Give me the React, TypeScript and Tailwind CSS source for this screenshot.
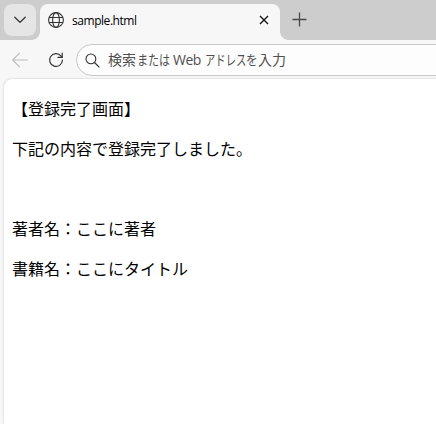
import React from "react";

const TAB_TITLE = "sample.html";

const ChevronIcon = () => (
  <svg width="12" height="8" viewBox="0 0 12 8" fill="none" stroke="#333" strokeWidth="1.3" strokeLinecap="round" strokeLinejoin="round">
    <path d="M0.8 1.2 6 6.4l5.2-5.2" />
  </svg>
);

const GlobeIcon = () => (
  <svg width="16" height="16" viewBox="0 0 16 16" fill="none" stroke="#333" strokeWidth="1.1">
    <circle cx="8" cy="8" r="7.4" />
    <ellipse cx="8" cy="8" rx="3.4" ry="7.4" />
    <path d="M1.2 5.5h13.6M1.2 10.5h13.6" />
  </svg>
);

const CloseIcon = () => (
  <svg width="10" height="10" viewBox="0 0 10 10" fill="none" stroke="#111" strokeWidth="1.3">
    <path d="m1 1 8 8M9 1 1 9" />
  </svg>
);

const PlusIcon = () => (
  <svg width="15" height="15" viewBox="0 0 15 15" fill="none" stroke="#4a4a4a" strokeWidth="1.3">
    <path d="M7.5 0.5v14M0.5 7.5h14" />
  </svg>
);

const BackIcon = () => (
  <svg width="16" height="16" viewBox="0 0 16 16" fill="none" stroke="#bdbdbd" strokeWidth="1.1" strokeLinecap="round" strokeLinejoin="round">
    <path d="M7.5 1.2.7 8l6.8 6.8M.7 8h15" />
  </svg>
);

const ReloadIcon = () => (
  <svg width="16" height="16" viewBox="0 0 16 16" fill="none" stroke="#333" strokeWidth="1.2" strokeLinecap="round" strokeLinejoin="round">
    <path d="M14.4 8A6.4 6.4 0 1 1 12.9 3.9L14 5.2" />
    <path d="M14.2 1.2v4.2H10" />
  </svg>
);

const SearchIcon = () => (
  <svg width="15" height="15" viewBox="0 0 15 15" fill="none" stroke="#333" strokeWidth="1.1" strokeLinecap="round">
    <circle cx="5.9" cy="5.9" r="4.9" />
    <path d="m9.5 9.5 4.5 4.5" />
  </svg>
);

const TabStrip = () => (
  <div className="flex h-10 bg-[#cdcdcd]">
    <button
      aria-label="Tab actions"
      className="mt-1 ml-1 flex h-8 w-8 items-center justify-center rounded-lg bg-[#e5e5e5]"
    >
      <ChevronIcon />
    </button>
    <div className="relative mt-1 ml-1 flex h-9 w-60 rounded-t-lg bg-[#f7f7f7] pl-2">
      <span className="absolute bottom-0 -left-2 h-2 w-2 bg-[radial-gradient(circle_at_0_0,transparent_7.5px,#f7f7f7_8px)]" />
      <span className="absolute -right-2 bottom-0 h-2 w-2 bg-[radial-gradient(circle_at_100%_0,transparent_7.5px,#f7f7f7_8px)]" />
      <div className="flex h-8 flex-1 items-center">
        <GlobeIcon />
        <span className="mt-px ml-2 font-['Open_Sans',sans-serif] text-xs tracking-[-0.45px] text-black">
          {TAB_TITLE}
        </span>
        <button aria-label="Close tab" className="mr-[11px] ml-auto">
          <CloseIcon />
        </button>
      </div>
    </div>
    <button aria-label="New tab" className="mt-[12px] ml-3 h-[15px]">
      <PlusIcon />
    </button>
  </div>
);

const Toolbar = () => (
  <div className="flex h-[39px] items-start">
    <button aria-label="Back" className="mt-[12px] ml-3">
      <BackIcon />
    </button>
    <button aria-label="Reload" className="mt-[12px] ml-5">
      <ReloadIcon />
    </button>
    <div className="mt-1 -mr-10 ml-3 flex h-8 flex-1 items-center rounded-full border border-[#c9c9c9] bg-[#fdfdfd] pl-2 whitespace-nowrap">
      <SearchIcon />
      <p className="ml-2 flex font-['Open_Sans','Noto_Sans_CJK_JP',sans-serif] text-sm text-[#505050]">
        <span className="w-[29px]">検索</span>
        <span className="w-[32px] origin-left scale-x-[0.79]">または</span>
        <span className="w-[36px] pl-1 tracking-[-0.5px]">Web</span>
        <span className="w-[41px] origin-left scale-x-[0.74]">アドレス</span>
        <span className="w-[12px] origin-left scale-x-[0.83]">を</span>
        <span>入力</span>
      </p>
    </div>
  </div>
);

const Page = () => (
  <main className="ml-1 flex-1 rounded-tl-lg bg-white pt-[17px] pl-2 font-['Noto_Sans_CJK_JP',sans-serif] text-base text-black shadow-[0_0_2px_rgba(0,0,0,0.25)]">
    <p className="mb-4">【登録完了画面】</p>
    <p className="mb-4">下記の内容で登録完了しました。</p>
    <br />
    <p className="my-4">著者名：ここに著者</p>
    <p>書籍名：ここにタイトル</p>
  </main>
);

export default function App() {
  return (
    <div className="flex h-screen flex-col overflow-hidden bg-[#f7f7f7]">
      <TabStrip />
      <Toolbar />
      <Page />
    </div>
  );
}
